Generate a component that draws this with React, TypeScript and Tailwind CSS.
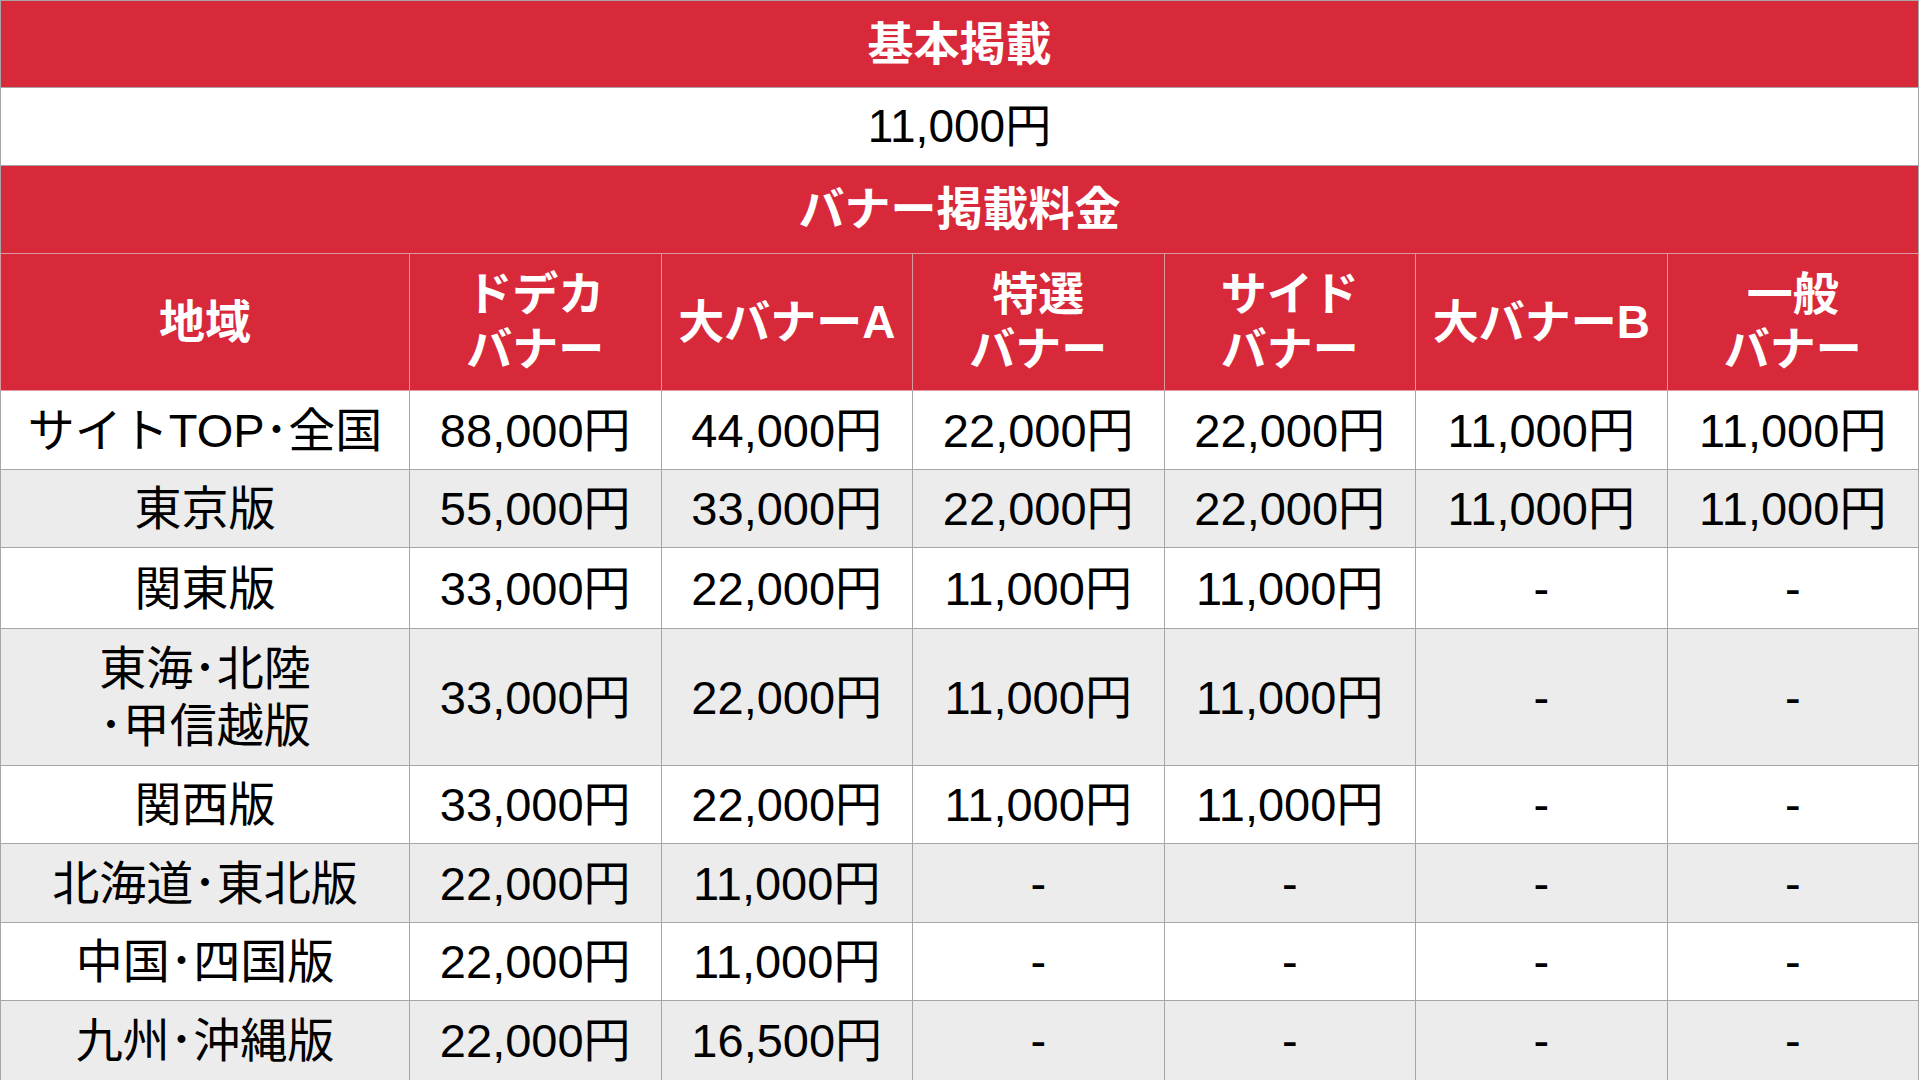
const PRICES: { area: string[]; cells: string[]; h: string }[] = [
  { area: ["サイトTOP･全国"], cells: ["88,000円", "44,000円", "22,000円", "22,000円", "11,000円", "11,000円"], h: "h-[79px]" },
  { area: ["東京版"], cells: ["55,000円", "33,000円", "22,000円", "22,000円", "11,000円", "11,000円"], h: "h-[78px]" },
  { area: ["関東版"], cells: ["33,000円", "22,000円", "11,000円", "11,000円", "-", "-"], h: "h-[81px]" },
  { area: ["東海･北陸", "･甲信越版"], cells: ["33,000円", "22,000円", "11,000円", "11,000円", "-", "-"], h: "h-[137px]" },
  { area: ["関西版"], cells: ["33,000円", "22,000円", "11,000円", "11,000円", "-", "-"], h: "h-[78px]" },
  { area: ["北海道･東北版"], cells: ["22,000円", "11,000円", "-", "-", "-", "-"], h: "h-[79px]" },
  { area: ["中国･四国版"], cells: ["22,000円", "11,000円", "-", "-", "-", "-"], h: "h-[78px]" },
  { area: ["九州･沖縄版"], cells: ["22,000円", "16,500円", "-", "-", "-", "-"], h: "h-[80px]" },
];

const HEADERS: string[][] = [
  ["ドデカ", "バナー"],
  ["大バナーA"],
  ["特選", "バナー"],
  ["サイド", "バナー"],
  ["大バナーB"],
  ["一般", "バナー"],
];

export default function App() {
  return (
    <div className="h-[1080px] w-[1919px] overflow-hidden bg-white font-['Liberation_Sans','Noto_Sans_CJK_JP',sans-serif] text-black">
      <table className="w-full table-fixed border-collapse">
        <colgroup>
          <col className="w-[409px]" />
          <col />
          <col />
          <col />
          <col />
          <col />
          <col />
        </colgroup>
        <tbody>
          <tr className="h-[87px] bg-[#d8293b]">
            <td colSpan={7} className="border border-[#a6a6a6] text-center text-[46px] font-bold text-white">
              基本掲載
            </td>
          </tr>
          <tr className="h-[78px] bg-white">
            <td colSpan={7} className="border border-[#a6a6a6] text-center text-[46px]">
              11,000円
            </td>
          </tr>
          <tr className="h-[88px] bg-[#d8293b]">
            <td colSpan={7} className="border border-[#a6a6a6] border-b-[#d99aa0] text-center text-[46px] font-bold text-white">
              バナー掲載料金
            </td>
          </tr>
          <tr className="h-[137px] bg-[#d8293b] text-[46px] font-bold leading-[55px] text-white">
            <td className="border border-[#d99aa0] text-center">地域</td>
            {HEADERS.map((lines, i) => (
              <td key={i} className="border border-[#d99aa0] text-center">
                {lines.map((l, j) => (
                  <div key={j}>{l}</div>
                ))}
              </td>
            ))}
          </tr>
          {PRICES.map((row, i) => (
            <tr
              key={i}
              className={`${row.h} ${i % 2 === 1 ? "bg-[#ececec]" : "bg-white"} text-[47px] leading-[57px]`}
            >
              <td className="border border-[#a6a6a6] text-center">
                {row.area.map((a, j) => (
                  <div key={j}>{a}</div>
                ))}
              </td>
              {row.cells.map((c, j) => (
                <td key={j} className="border border-[#a6a6a6] text-center">
                  {c}
                </td>
              ))}
            </tr>
          ))}
        </tbody>
      </table>
    </div>
  );
}
